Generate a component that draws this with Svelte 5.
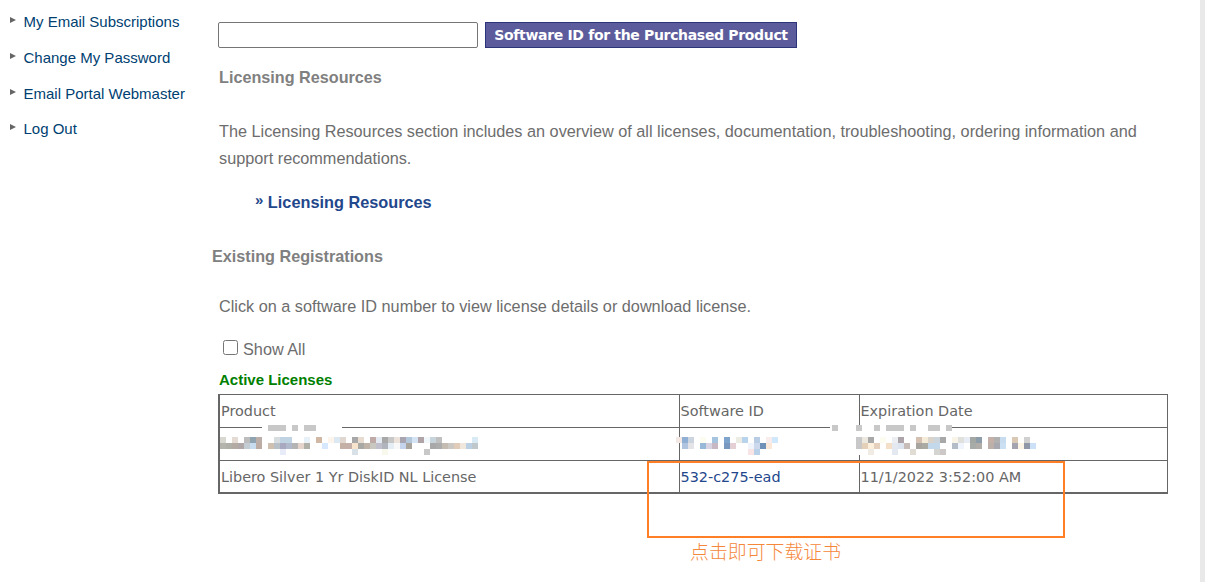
<script>
	const menu = ['My Email Subscriptions', 'Change My Password', 'Email Portal Webmaster', 'Log Out'];

	// blurred row: runs of 6px blocks, x and y in page pixels, '' leaves a gap
	const runs = [
		[220, 437, '#d8d8d0,,#e4dcd4,,#bdbdbd,#8fa3b0,#bcaea8,,,#d8dde0,#bfd3e2,#bfd3e2,,,#e8f0f8,,#d0b8a4,,#fdf4ec,#dce8f2,#e0d8d0,,#a8a8a8,#e8dcd0,,#c0aaa8,#e4eaf2,#a8a8a8,#c8c8c8,#ece4dc,#a8a4b0,#b4c8dc,#d4e4f4,#b0a4a8,#f0f8fc,#c8d4dc,#c0c0c0,,,,,,#d8eaf4'],
		[220, 443, '#b4b4ac,#b0b0a8,#b4aca4,#b0a8a8,#c4ccd4,#c8dcf0,#bcaca4,,#d0c0b0,#b8c0c8,#a8a8c0,#b0b8cc,#b4b4b4,#e4d4cc,#b0b0a8,,,#d8e8fc,,,#c4b0a4,#c4b0a8,#f8e4cc,#a8a8a4,#c0b4a8,#c8c8c0,#c0c0cc,#b0b4bc,#e4ecf4,#f8f8f8,#c4d4ec,#a8a49c,,,,#a8a8a8,#acacac,#c4bcb0,#ccc8c4,#e0ccb8,#f0e8dc,#bcd0e4,#c0c8cc'],
		[280, 449, '#e8ecf8,,,,,,,,,,,,#d8e0e8,,,,,#f8f8ec,,,,,,,#c8c8c8'],
		[268, 425, '#c8c8c8,#c8c8c8,#c8c8c8,,#c8c8c8,,#c8c8c8,#c8c8c8'],
		[676, 437, '#f4e8e4,#8fb0d4,#ccd4e0,,#fcfcf0,,#a4c4e0,,#7fa4cc,,#ecece4,#b8d4ec,,#b8cce4,,#f8ecec,#d0e8fc'],
		[682, 443, '#b0c4e0,#e4e4e8,,#98b8d8,#d8d4e4,#c8b8c4,,#7898c0,#e4d0d4,,,#f0f4fc,#ccd8ec,#7090b8,#fce8d8'],
		[748, 449, '#f8e4e4,#b8d0e8'],
		[856, 437, '#c8c8c8,#ece8e0,#a8a8a8,,#fcfcf0,,#eceef2,#aca4a8,,,#d4c0b0,#f4ecd8,#d8d4cc,#ccd4dc,#a8a8a8,,#f8f4e8,#e0e0dc,#e8ecf4,#a4a8a4,#8c9ca8,,#c4b0a8,#b0b0b0,#c8dcf0,,#d8c8b4,,#d0d0d0'],
		[856, 443, '#c8c8c8,#e4d0b8,#fcf0dc,#e4d0bc,,#f4e0c8,#e4e8f0,#dce4f0,#c8bcb8,,#a8a4a0,#ababa4,#c4d8ec,#c4d8ec,,,#b4bcc8,#f0f4fc,,#a8aca8,#b0aca8,,#bcb0a8,#a8a8b0,#cce0f4,,#a4a4b0,#fcf4e4,#9098a8,#cce0f8'],
		[868, 449, '#f0ece4,,,,#e4e8f0,,,#e0dcd4,,,,#d4d4d0,#ccc8c8'],
		[832, 425, '#c8c8c8,,,,#c8c8c8,,,#c8c8c8,,#c8c8c8,#c8c8c8,#c8c8c8,,#c8c8c8,,,#c8c8c8,#c8c8c8,,#c8c8c8']
	];

	const blocks = runs.flatMap(([x, y, colours]) =>
		colours
			.split(',')
			.map((colour, i) => ({ left: x + i * 6 - 219, top: y - 394, colour }))
			.filter((block) => block.colour)
	);
</script>

<div class="page">
	<aside class="sidebar">
		<ul>
			{#each menu as item}
				<li><a href="#top">{item}</a></li>
			{/each}
		</ul>
	</aside>

	<main class="content">
		<div class="search-row">
			<input class="search" type="text" />
			<button class="search-button">Software ID for the Purchased Product</button>
		</div>

		<h3>Licensing Resources</h3>
		<p class="intro">
			The Licensing Resources section includes an overview of all licenses, documentation, troubleshooting, ordering information and support recommendations.
		</p>
		<a class="resource-link" href="#top"><span class="chevrons">»</span> Licensing Resources</a>

		<h3 class="existing">Existing Registrations</h3>
		<p class="hint">Click on a software ID number to view license details or download license.</p>

		<label class="show-all"><input type="checkbox" /> Show All</label>
		<div class="active">Active Licenses</div>

		<div class="table-wrap">
			<table>
				<thead>
					<tr><th class="c1">Product</th><th class="c2">Software ID</th><th>Expiration Date</th></tr>
				</thead>
				<tbody>
					<tr><td></td><td></td><td></td></tr>
					<tr class="last">
						<td>Libero Silver 1 Yr DiskID NL License</td>
						<td><a href="#top">532-c275-ead</a></td>
						<td>11/1/2022 3:52:00 AM</td>
					</tr>
				</tbody>
			</table>

			<div class="mosaic">
				<b class="patch line-a"></b>
				<b class="patch line-b"></b>
				<b class="patch col"></b>
				{#each blocks as block}
					<i style="left:{block.left}px;top:{block.top}px;background:{block.colour}"></i>
				{/each}
			</div>

			<div class="callout"></div>
			<div class="callout-text">点击即可下载证书</div>
		</div>
	</main>
	<div class="scrollbar"></div>
</div>

<style>
	:global(body) {
		margin: 0;
		background: #fff;
		font-family: 'Liberation Sans', Arial, sans-serif;
	}

	.page {
		display: flex;
		height: 582px;
		overflow: hidden;
	}

	.sidebar {
		width: 219px;
		flex: none;
	}

	ul {
		list-style: none;
		margin: 0;
		padding: 4px 0 0 9px;
	}

	li {
		position: relative;
		padding-left: 14.5px;
		height: 35.8px;
		line-height: 36px;
		font-size: 15px;
	}

	li::before {
		content: '';
		position: absolute;
		left: 1px;
		top: 13px;
		border-left: 6px solid #666;
		border-top: 3px solid transparent;
		border-bottom: 3px solid transparent;
	}

	a {
		color: #003f72;
		text-decoration: none;
	}

	.content {
		width: 949px;
		flex: none;
		color: #6d6d6d;
		font-size: 16.25px;
	}

	.search-row {
		display: flex;
		gap: 7px;
		padding-top: 22px;
		margin-left: -1px;
	}

	.search {
		box-sizing: border-box;
		width: 260px;
		height: 26px;
		margin: 0;
		border: 1px solid #767676;
		border-radius: 2px;
	}

	.search-button {
		box-sizing: border-box;
		height: 26px;
		width: 312px;
		padding: 0;
		background: #5c5c9c;
		border: 1px solid #2e3478;
		color: #fff;
		font: bold 14px 'DejaVu Sans', sans-serif;
		letter-spacing: -0.33px;
	}

	h3 {
		margin: 0;
		color: #808080;
		font-size: 16.2px;
		line-height: 20px;
	}

	.search-row + h3 {
		margin-top: 19px;
	}

	.intro {
		margin: 31px 0 0;
		line-height: 27px;
		width: 940px;
	}

	.resource-link {
		display: block;
		margin: 20px 0 0 36px;
		color: #23478c;
		font-weight: bold;
		font-size: 16.3px;
		line-height: 20px;
	}

	.chevrons {
		font-size: 15px;
		position: relative;
		top: -3px;
	}

	.existing {
		margin: 33px 0 0 -7px;
	}

	.hint {
		margin: 30px 0 0;
		line-height: 20px;
	}

	.show-all {
		display: flex;
		align-items: center;
		margin: 23px 0 0 4px;
		line-height: 20px;
	}

	.show-all input {
		width: 15px;
		height: 15px;
		margin: -4px 5px 0 0;
	}

	.active {
		margin-top: 12px;
		color: #008000;
		font-size: 15px;
		font-weight: bold;
		line-height: 18px;
	}

	.table-wrap {
		position: relative;
		margin-top: 5px;
		width: 949px;
	}

	table {
		width: 950px;
		margin-left: -1px;
		border-collapse: collapse;
		table-layout: fixed;
		font: 14.4px 'DejaVu Sans', sans-serif;
		color: #666;
		border: 1px solid #666;
		border-left-width: 2px;
		border-bottom-width: 2px;
	}

	th,
	td {
		height: 32px;
		padding: 0 1px;
		border: 1px solid #666;
		font-weight: normal;
		text-align: left;
	}

	th {
		box-sizing: border-box;
		height: 33px;
	}

	.last td {
		height: 31px;
	}

	.c1 {
		width: 460px;
	}

	.c2 {
		width: 180px;
	}

	td a {
		color: #23478c;
	}

	.mosaic i {
		position: absolute;
		width: 6px;
		height: 6px;
	}

	.patch {
		position: absolute;
		background: #fff;
	}

	.line-a {
		left: 43px;
		top: 31px;
		width: 80px;
		height: 4px;
	}

	.line-b {
		left: 611px;
		top: 31px;
		width: 121px;
		height: 4px;
	}

	.col {
		left: 639px;
		top: 35px;
		width: 3px;
		height: 26px;
	}

	.callout {
		position: absolute;
		left: 428px;
		top: 67px;
		width: 414px;
		height: 73px;
		border: 2px solid #ff7f27;
	}

	.callout-text {
		position: absolute;
		left: 471px;
		top: 145px;
		color: #f5873a;
		font-size: 18.9px;
		line-height: 24px;
		font-family: 'Noto Sans CJK SC', sans-serif;
		font-weight: 300;
	}

	.scrollbar {
		flex: none;
		width: 5px;
		margin-left: 32px;
		background: #e9e9e9;
	}
</style>
